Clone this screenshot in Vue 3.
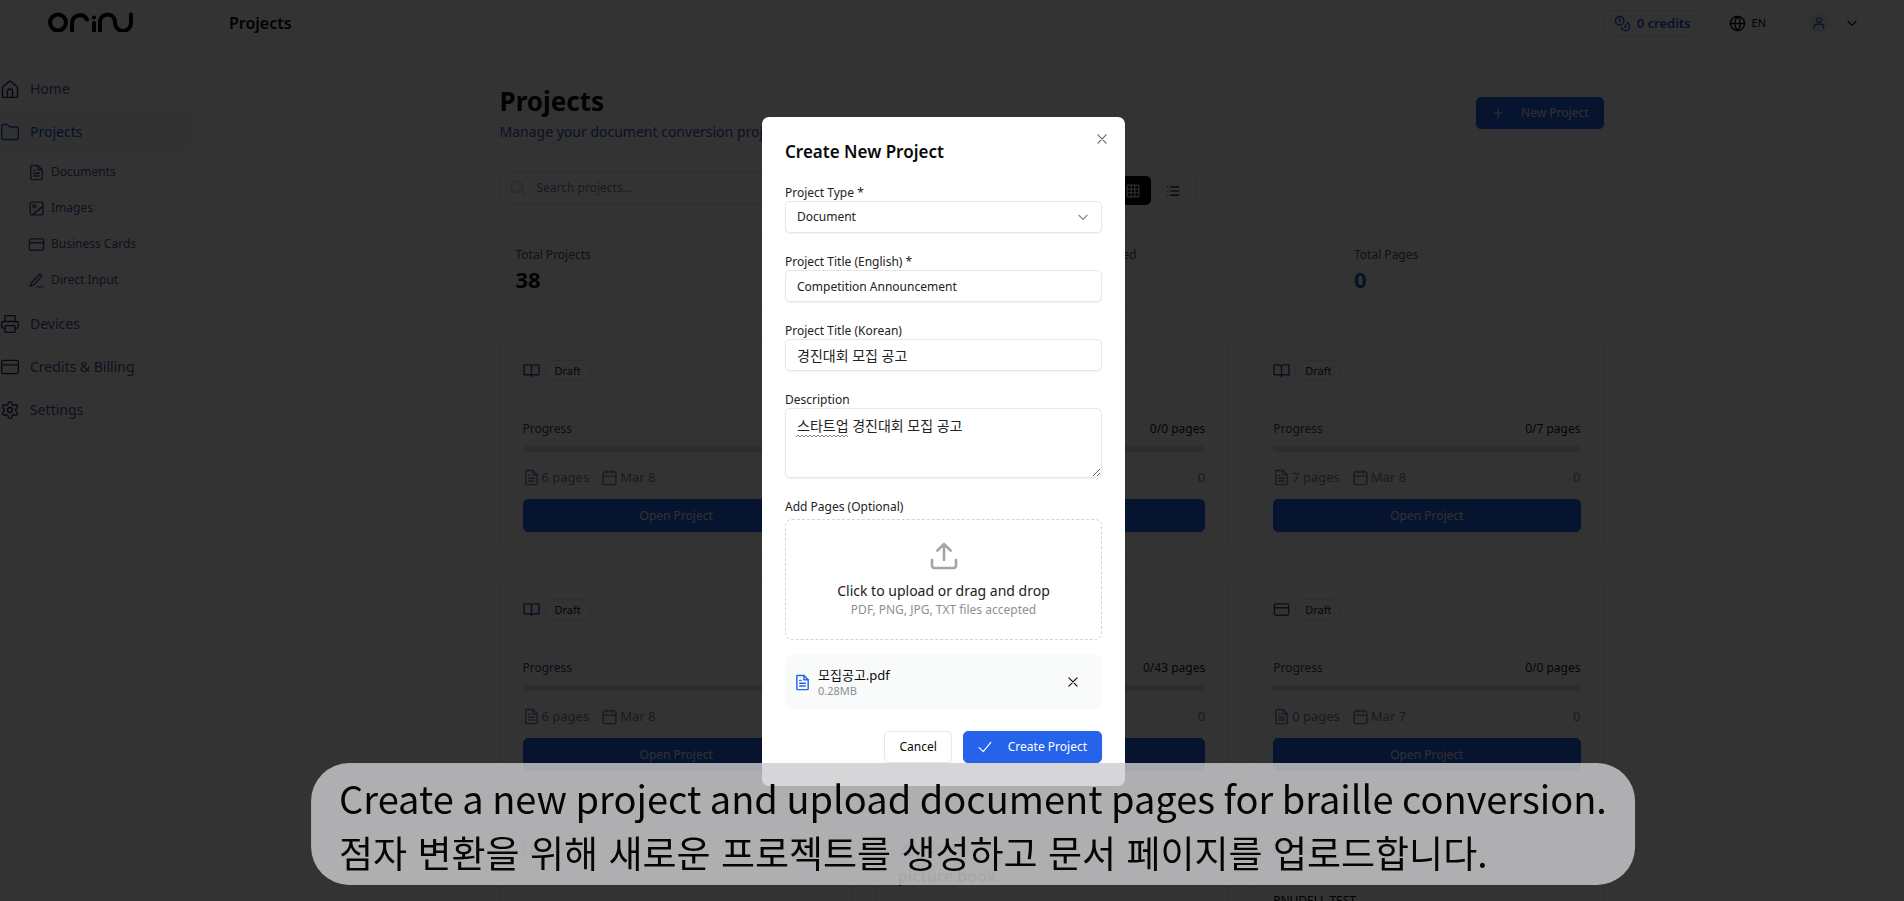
<template>
    <div class="app">
        <aside class="sidebar">
            <a href="#" class="logo" aria-label="orinu">
                <svg viewBox="0 0 86 20" width="86" height="20">
                    <circle cx="10" cy="10.500" r="8" />
                    <path d="M24 18.500v-8a8 8 0 0 1 15-3" />
                    <path d="M46 11v7.500M46 5.500v.1" />
                    <path d="M52 18.500v-8.500a7.500 7.500 0 0 1 15 0v1a8 8 0 0 0 16 0V2.500" />
                </svg>
            </a>
            <nav class="nav">
                <template v-for="item in menu" :key="item.label">
                    <a href="#" class="nav-item" :class="{ active: item.active }">
                        <svg class="icon i20" viewBox="0 0 24 24" v-html="icons[item.icon]"></svg>
                        {{ item.label }}
                    </a>
                    <div v-if="item.children" class="sub-nav">
                        <a v-for="sub in item.children" :key="sub.label" href="#" class="sub-item">
                            <svg class="icon i17" viewBox="0 0 24 24" v-html="icons[sub.icon]"></svg>
                            {{ sub.label }}
                        </a>
                    </div>
                </template>
            </nav>
        </aside>

        <div class="page">
            <header class="topbar">
                <span class="topbar-title">Projects</span>
                <div class="topbar-right">
                    <button type="button" class="credits">
                        <svg class="icon i17" viewBox="0 0 24 24" v-html="icons.coins"></svg>
                        0 credits
                    </button>
                    <button type="button" class="lang">
                        <svg class="icon i17" viewBox="0 0 24 24" v-html="icons.globe"></svg>
                        EN
                    </button>
                    <button type="button" class="user" aria-label="Account">
                        <span class="avatar">
                            <svg class="icon i14" viewBox="0 0 24 24" v-html="icons.user"></svg>
                        </span>
                        <svg class="icon i14" viewBox="0 0 24 24" v-html="icons.chevron"></svg>
                    </button>
                </div>
            </header>

            <main class="content">
                <div class="head">
                    <div>
                        <h1>Projects</h1>
                        <p class="lead">Manage your document conversion projects</p>
                    </div>
                    <button type="button" class="btn primary new-project">
                        <svg class="icon i14" viewBox="0 0 24 24" v-html="icons.plus"></svg>
                        New Project
                    </button>
                </div>

                <div class="tools">
                    <label class="search">
                        <svg class="icon i17" viewBox="0 0 24 24" v-html="icons.search"></svg>
                        <input type="text" placeholder="Search projects..." aria-label="Search projects" />
                    </label>
                    <div class="view-toggle">
                        <button type="button" class="on" aria-label="Grid view">
                            <svg class="icon i14" viewBox="0 0 24 24" v-html="icons.grid"></svg>
                        </button>
                        <button type="button" aria-label="List view">
                            <svg class="icon i14" viewBox="0 0 24 24" v-html="icons.list"></svg>
                        </button>
                    </div>
                </div>

                <div class="stats">
                    <div v-for="stat in stats" :key="stat.label" class="stat">
                        <span class="stat-label">{{ stat.label }}</span>
                        <strong :class="{ blue: stat.blue }">{{ stat.value }}</strong>
                    </div>
                </div>

                <div class="cards">
                    <article v-for="(card, i) in cards" :key="i" class="card">
                        <div class="card-top">
                            <svg class="icon i17" viewBox="0 0 24 24" v-html="icons[card.icon]"></svg>
                            <span class="badge">Draft</span>
                        </div>
                        <div class="card-text">
                            <h3 v-if="card.title">{{ card.title }}</h3>
                            <p v-if="card.note">{{ card.note }}</p>
                        </div>
                        <template v-if="card.done">
                            <div class="progress-row">
                                <span>Progress</span>
                                <b>{{ card.done }} pages</b>
                            </div>
                            <div class="bar"></div>
                            <div class="meta">
                                <svg class="icon i17" viewBox="0 0 24 24" v-html="icons.file"></svg>
                                <span>{{ card.pages }} pages</span>
                                <svg class="icon i17 date" viewBox="0 0 24 24" v-html="icons.calendar"></svg>
                                <span>{{ card.date }}</span>
                                <span class="count">0</span>
                            </div>
                            <button type="button" class="btn primary open">Open Project</button>
                        </template>
                    </article>
                </div>
            </main>
        </div>

        <div class="overlay">
            <form class="modal" role="dialog" aria-labelledby="modal-title" @submit.prevent>
                <button type="button" class="close" aria-label="Close">
                    <svg class="icon i14" viewBox="0 0 24 24" v-html="icons.x"></svg>
                </button>
                <h2 id="modal-title">Create New Project</h2>

                <div class="field">
                    <label for="type">Project Type *</label>
                    <div class="select-wrap">
                        <select id="type" v-model="form.type">
                            <option>Document</option>
                            <option>Image</option>
                            <option>Business Card</option>
                        </select>
                        <svg class="icon i14" viewBox="0 0 24 24" v-html="icons.chevron"></svg>
                    </div>
                </div>
                <div class="field">
                    <label for="title-en">Project Title (English) *</label>
                    <input id="title-en" v-model="form.titleEn" type="text" />
                </div>
                <div class="field">
                    <label for="title-ko">Project Title (Korean)</label>
                    <input id="title-ko" v-model="form.titleKo" type="text" class="ko" />
                </div>
                <div class="field desc">
                    <label for="desc">Description</label>
                    <textarea id="desc" v-model="form.description" class="ko" spellcheck="false"></textarea>
                    <!-- spelling mark under the first word -->
                    <svg class="squiggle" viewBox="0 0 52 4" width="52" height="4">
                        <path d="M0 3l2-2 2 2 2-2 2 2 2-2 2 2 2-2 2 2 2-2 2 2 2-2 2 2 2-2 2 2 2-2 2 2 2-2 2 2 2-2 2 2 2-2 2 2 2-2 2 2 2-2 2 2" />
                    </svg>
                </div>

                <div class="field">
                    <label for="files">Add Pages (Optional)</label>
                    <label class="drop">
                        <svg class="icon i32" viewBox="0 0 24 24" v-html="icons.upload"></svg>
                        <span class="drop-main">Click to upload or drag and drop</span>
                        <span class="drop-hint">PDF, PNG, JPG, TXT files accepted</span>
                        <input id="files" type="file" multiple />
                    </label>
                </div>

                <div class="file">
                    <svg class="icon i17" viewBox="0 0 24 24" v-html="icons.file"></svg>
                    <div class="file-info">
                        <span class="file-name">모집공고.pdf</span>
                        <span class="file-size">0.28MB</span>
                    </div>
                    <button type="button" aria-label="Remove file">
                        <svg class="icon i14" viewBox="0 0 24 24" v-html="icons.x"></svg>
                    </button>
                </div>

                <div class="actions">
                    <button type="button" class="btn">Cancel</button>
                    <button type="submit" class="btn primary create">
                        <svg class="icon i14" viewBox="0 0 24 24" v-html="icons.check"></svg>
                        Create Project
                    </button>
                </div>
            </form>
        </div>

        <div class="caption">
            <p>Create a new project and upload document pages for braille conversion.</p>
            <p lang="ko">점자 변환을 위해 새로운 프로젝트를 생성하고 문서 페이지를 업로드합니다.</p>
        </div>
    </div>
</template>

<script setup>
import { reactive } from 'vue'

const icons = {
    home: '<path d="M3 10l9-8 9 8v12H3z"/><path d="M9 22v-7a3 3 0 0 1 6 0v7"/>',
    folder: '<path d="M2 4.500A1.500 1.500 0 0 1 3.500 3H9l3 3h8.500A1.500 1.500 0 0 1 22 7.500v12a1.500 1.500 0 0 1-1.500 1.500h-17A1.500 1.500 0 0 1 2 19.500z"/>',
    file: '<path d="M14 2H5a1 1 0 0 0-1 1v18a1 1 0 0 0 1 1h14a1 1 0 0 0 1-1V8z"/><path d="M14 2v6h6M8 9h2M8 13h8M8 17h8"/>',
    image: '<rect x="3" y="3" width="18" height="18" rx="2"/><circle cx="9" cy="9" r="2"/><path d="M6 21L21 9"/>',
    card: '<rect x="2" y="4" width="20" height="16" rx="2"/><path d="M2 9.500h20"/>',
    pen: '<path d="M17 3l3 3L8 18l-5 2 2-5zM13 21h8"/>',
    printer: '<path d="M6 17H4a2 2 0 0 1-2-2v-4a2 2 0 0 1 2-2h16a2 2 0 0 1 2 2v4a2 2 0 0 1-2 2h-2"/><path d="M6 9V2h12v7"/><rect x="6" y="14" width="12" height="8" rx="1"/>',
    gear: '<path d="M12.220 2h-.440a2 2 0 0 0-2 2v.180a2 2 0 0 1-1 1.730l-.430.250a2 2 0 0 1-2 0l-.150-.080a2 2 0 0 0-2.730.730l-.220.380a2 2 0 0 0 .730 2.730l.150.100a2 2 0 0 1 1 1.720v.510a2 2 0 0 1-1 1.740l-.150.090a2 2 0 0 0-.730 2.730l.220.380a2 2 0 0 0 2.730.730l.150-.080a2 2 0 0 1 2 0l.430.250a2 2 0 0 1 1 1.730V20a2 2 0 0 0 2 2h.440a2 2 0 0 0 2-2v-.180a2 2 0 0 1 1-1.730l.430-.250a2 2 0 0 1 2 0l.150.080a2 2 0 0 0 2.730-.730l.220-.390a2 2 0 0 0-.730-2.730l-.150-.080a2 2 0 0 1-1-1.740v-.500a2 2 0 0 1 1-1.740l.150-.090a2 2 0 0 0 .730-2.730l-.220-.380a2 2 0 0 0-2.730-.730l-.150.080a2 2 0 0 1-2 0l-.430-.250a2 2 0 0 1-1-1.730V4a2 2 0 0 0-2-2z"/><circle cx="12" cy="12" r="3"/>',
    coins: '<circle cx="8" cy="8" r="6"/><path d="M18 10.400A6 6 0 1 1 10.300 18"/><path d="M7 6h1v4M16.700 13.900l.7.7-2.800 2.800"/>',
    globe: '<circle cx="12" cy="12" r="10"/><path d="M12 2a14.500 14.500 0 0 0 0 20 14.500 14.500 0 0 0 0-20M2 12h20"/>',
    user: '<path d="M4 21v-3a4 4 0 0 1 4-4h8a4 4 0 0 1 4 4v3"/><circle cx="12" cy="7" r="4"/>',
    chevron: '<path d="M5 9l7 7 7-7"/>',
    plus: '<path d="M5 12h14M12 5v14"/>',
    search: '<circle cx="11" cy="11" r="8"/><path d="M21 21l-4-4"/>',
    grid: '<rect x="2" y="2" width="20" height="20" rx="1"/><path d="M2 9h20M2 15h20M9 2v20M15 2v20"/>',
    list: '<path d="M8 5h14M8 12h14M8 19h14M3 5h.1M3 12h.1M3 19h.1"/>',
    book: '<path d="M12 6v15M1.500 18V4H9a3 3 0 0 1 3 3 3 3 0 0 1 3-3h7.500v14H15a3 3 0 0 0-3 3 3 3 0 0 0-3-3z"/>',
    calendar: '<rect x="3" y="4" width="18" height="18" rx="2"/><path d="M8 2v4M16 2v4M3 10h18"/>',
    x: '<path d="M5 5l14 14M19 5L5 19"/>',
    upload: '<path d="M21 15v4a2 2 0 0 1-2 2H5a2 2 0 0 1-2-2v-4M7 8l5-5 5 5M12 3v12"/>',
    check: '<path d="M2 13l7 7L22 4"/>',
}

const menu = [
    { label: 'Home', icon: 'home' },
    {
        label: 'Projects',
        icon: 'folder',
        active: true,
        children: [
            { label: 'Documents', icon: 'file' },
            { label: 'Images', icon: 'image' },
            { label: 'Business Cards', icon: 'card' },
            { label: 'Direct Input', icon: 'pen' },
        ],
    },
    { label: 'Devices', icon: 'printer' },
    { label: 'Credits & Billing', icon: 'card' },
    { label: 'Settings', icon: 'gear' },
]

const stats = [
    { label: 'Total Projects', value: 38 },
    { label: 'Draft', value: 38 },
    { label: 'Completed', value: '' },
    { label: 'Total Pages', value: 0, blue: true },
]

const cards = [
    { icon: 'book', done: '0/6', pages: 6, date: 'Mar 8' },
    { icon: 'book', done: '0/0', pages: 0, date: 'Mar 8' },
    { icon: 'book', done: '0/7', pages: 7, date: 'Mar 8' },
    { icon: 'book', done: '0/6', pages: 6, date: 'Mar 8' },
    { icon: 'book', done: '0/43', pages: 43, date: 'Mar 8' },
    { icon: 'card', done: '0/0', pages: 0, date: 'Mar 7' },
    { icon: 'book' },
    { icon: 'pen', title: 'picture book' },
    { icon: 'book', note: 'PNUDELL TEST' },
]

const form = reactive({
    type: 'Document',
    titleEn: 'Competition Announcement',
    titleKo: '경진대회 모집 공고',
    description: '스타트업 경진대회 모집 공고',
})
</script>

<style>
body {
    overflow: hidden;
}
</style>

<style scoped>
* {
    box-sizing: border-box;
}

.app {
    display: flex;
    height: 100vh;
    overflow: hidden;
    background: #fff;
    color: #0a0a0a;
    font: 12px/18px "Noto Sans", "Noto Sans CJK KR", sans-serif;
}

h1,
h2,
h3,
p {
    margin: 0;
}

a {
    color: inherit;
    text-decoration: none;
}

button,
input,
select,
textarea {
    font: inherit;
    color: inherit;
}

button {
    padding: 0;
    border: 0;
    background: none;
}

.icon {
    flex: none;
    fill: none;
    stroke: currentColor;
    stroke-width: 2;
    stroke-linecap: round;
    stroke-linejoin: round;
}

.i14 {
    width: 14px;
    height: 14px;
}

.i17 {
    width: 17px;
    height: 17px;
}

.i20 {
    width: 20px;
    height: 20px;
    stroke-width: 1.6;
}

.i32 {
    width: 32px;
    height: 32px;
}

/* sidebar */
.sidebar {
    flex: none;
    width: 207px;
    border-right: 1px solid #f6f7f8;
}

.logo {
    display: block;
    height: 52px;
    padding: 12px 0 0 48px;
}

.logo svg {
    display: block;
    fill: none;
    stroke: #000;
    stroke-width: 4;
    stroke-linecap: round;
}

.nav {
    display: flex;
    flex-direction: column;
    gap: 6px;
    padding: 18px 15px 0 0;
}

.nav-item {
    display: flex;
    align-items: center;
    gap: 10px;
    height: 37px;
    border-radius: 0 7px 7px 0;
    color: #405894;
    font-size: 14px;
}

.nav-item .icon {
    color: #1c2c50;
}

.nav-item.active,
.nav-item.active .icon {
    color: #2050c8;
}

.nav-item.active {
    background: #fafafb;
    border: 1px solid #eceef1;
    border-left: 0;
}

.sub-nav {
    display: flex;
    flex-direction: column;
    gap: 4px;
    padding: 0 0 3px 28px;
}

.sub-item {
    display: flex;
    align-items: center;
    gap: 6px;
    height: 32px;
    color: #405894;
}

/* top bar */
.page {
    flex: 1;
    min-width: 0;
}

.topbar {
    display: flex;
    align-items: center;
    justify-content: space-between;
    height: 46px;
    padding: 0 29px 0 22px;
}

.topbar-title {
    font-size: 16px;
    font-weight: 600;
}

.topbar-right {
    display: flex;
    align-items: center;
    gap: 16px;
}

.topbar-right button {
    display: flex;
    align-items: center;
    justify-content: center;
    gap: 6px;
    border: 1px solid #e5e7eb;
    border-radius: 7px;
}

.topbar-right .credits {
    height: 27px;
    padding: 0 10px;
    border-color: #e2e6ee;
    color: #2555c8;
    font-size: 13px;
    font-weight: 600;
}

.topbar-right .lang {
    height: 30px;
    padding: 0 10px;
    border-color: #f1f2f4;
    font-size: 11px;
}

.topbar-right .user {
    gap: 16px;
    height: 32px;
    padding: 0 15px;
    border-color: #f1f2f4;
}

.avatar {
    display: grid;
    place-items: center;
    width: 20px;
    height: 20px;
    border-radius: 50%;
    background: #e8ebf2;
    color: #2555c8;
}

/* content */
.content {
    width: calc(100% - 28px);
    max-width: 1104px;
    margin: 0 auto;
    padding-top: 38px;
    position: relative;
    right: 4px;
}

.head {
    display: flex;
    align-items: flex-start;
    justify-content: space-between;
    height: 61px;
}

h1 {
    font-size: 26px;
    line-height: 34px;
    font-weight: 700;
}

.lead {
    margin-top: 2px;
    color: #3858b0;
    font-size: 14px;
    line-height: 24px;
}

.btn {
    display: flex;
    align-items: center;
    justify-content: center;
    height: 32px;
    padding: 0 14px;
    border: 1px solid #e5e7eb;
    border-radius: 5px;
    background: #fff;
    box-shadow: 0 1px 2px rgba(0, 0, 0, .06);
}

.primary {
    border-color: #2563eb;
    background: #2563eb;
    color: #fff;
}

.new-project {
    margin-top: 13px;
}

.head .btn,
.open {
    color: #eceef2;
}

.new-project,
.create {
    gap: 16px;
}

.tools {
    display: flex;
    align-items: flex-start;
    gap: 14px;
    max-width: 696px;
    margin-top: 26px;
}

.search {
    display: flex;
    flex: 1;
    align-items: center;
    gap: 11px;
    height: 33px;
    padding: 0 8px;
    border: 1px solid #e5e7eb;
    border-radius: 5px;
    color: #cdd0d6;
}

.search input {
    flex: 1;
    min-width: 0;
    padding: 0;
    border: 0;
    outline: 0;
    background: none;
}

.search input::placeholder {
    color: #7284b0;
}

.view-toggle {
    display: flex;
    gap: 4px;
    padding: 4px;
    border: 1px solid #e9ebee;
    border-radius: 7px;
}

.view-toggle button {
    display: grid;
    place-items: center;
    width: 36px;
    height: 29px;
    border-radius: 5px;
}

.view-toggle .on {
    background: #000;
    color: #e5e7eb;
}

.stats {
    display: grid;
    grid-template-columns: repeat(4, 1fr);
    gap: 14px;
    margin-top: 22px;
}

.stat {
    display: flex;
    flex-direction: column;
    height: 78px;
    padding: 13px 15px;
    border: 1px solid #eff0f2;
    border-radius: 7px;
}

.stat-label {
    color: #405894;
}

.stat strong {
    font-size: 22px;
    line-height: 30px;
    font-weight: 700;
}

.stat .blue {
    color: #2555c8;
}

.cards {
    display: grid;
    grid-template-columns: repeat(3, 1fr);
    gap: 21px 22px;
    margin-top: 28px;
}

.card {
    height: 218px;
    padding: 21px 22px;
    border: 1px solid #eaecef;
    border-radius: 10px;
}

.card-top {
    display: flex;
    align-items: center;
    gap: 5px;
    height: 21px;
    color: #3050a4;
}

.badge {
    height: 21px;
    padding: 0 9px;
    border: 1px solid #e5e7eb;
    border-radius: 7px;
    color: #111c38;
    font-size: 11px;
    line-height: 19px;
}

.card-text {
    display: flex;
    flex-direction: column;
    height: 39px;
    padding-top: 6px;
}

h3 {
    font-size: 16px;
    line-height: 22px;
    font-weight: 600;
}

.card-text p {
    margin-top: 28px;
    line-height: 16px;
}

.progress-row {
    display: flex;
    justify-content: space-between;
    color: #33487c;
}

.progress-row b {
    color: #111c38;
    font-weight: 400;
}

.bar {
    height: 6px;
    margin-top: 8px;
    border-radius: 3px;
    background: #dcdee3;
}

.meta {
    display: flex;
    align-items: center;
    gap: 2px;
    height: 18px;
    margin-top: 16px;
    color: #7284b0;
    font-size: 13px;
}

.date {
    margin-left: 10px;
}

.count {
    margin-left: auto;
}

.open {
    width: 100%;
    height: 33px;
    margin-top: 13px;
}

/* modal */
.overlay {
    position: fixed;
    inset: 0;
    display: grid;
    place-items: center;
    padding: 2px 17px 0 0;
    background: rgba(0, 0, 0, .8);
}

.modal {
    position: relative;
    width: 363px;
    padding: 23px;
    border-radius: 7px;
    background: #fff;
}

.close {
    position: absolute;
    top: 15px;
    right: 16px;
    color: #666;
}

.close svg {
    display: block;
}

h2 {
    font-size: 17px;
    line-height: 24px;
    font-weight: 600;
}

.field {
    display: flex;
    flex-direction: column;
    margin-top: 20px;
}

.field > label:first-child {
    line-height: 17px;
    color: #222;
}

.field input[type="text"],
.field select,
.field textarea {
    display: block;
    width: 100%;
    height: 32px;
    padding: 0 11px;
    border: 1px solid #e5e7eb;
    border-radius: 5px;
    outline: 0;
    background: #fff;
    color: #222;
    box-shadow: 0 1px 2px rgba(0, 0, 0, .06);
}

.select-wrap {
    position: relative;
}

.field select {
    appearance: none;
}

.select-wrap svg {
    position: absolute;
    top: 9px;
    right: 12px;
    color: #888;
    pointer-events: none;
}

.field textarea {
    height: 70px;
    padding: 8px 11px;
}

.field .ko {
    font-size: 14px;
}

.desc {
    position: relative;
}

.squiggle {
    position: absolute;
    top: 43px;
    left: 11px;
    fill: none;
    stroke: #888;
}

.drop {
    display: flex;
    flex-direction: column;
    align-items: center;
    height: 121px;
    margin-top: 4px;
    padding-top: 20px;
    border: 1px dashed #d1d5db;
    border-radius: 7px;
}

.drop svg {
    color: #a3a6ad;
}

.drop-main {
    margin-top: 9px;
    color: #222;
    font-size: 14px;
    line-height: 20px;
}

.drop-hint {
    color: #8b8f98;
}

.drop input {
    position: absolute;
    width: 1px;
    height: 1px;
    opacity: 0;
}

.file {
    display: flex;
    align-items: center;
    gap: 7px;
    height: 54px;
    margin-top: 15px;
    padding: 0 22px 0 9px;
    border-radius: 7px;
    background: #f9fafa;
}

.file > svg {
    color: #2563eb;
}

.file-info {
    display: flex;
    flex: 1;
    flex-direction: column;
}

.file-name {
    font-size: 13px;
}

.file-size {
    color: #8b8f98;
    font-size: 11px;
    line-height: 14px;
}

.file button svg {
    display: block;
}

.actions {
    display: flex;
    justify-content: flex-end;
    gap: 11px;
    margin-top: 22px;
}

/* caption bar */
.caption {
    position: fixed;
    bottom: 16px;
    left: calc(50% + 21px);
    width: max-content;
    padding: 9px 28px 7px;
    border-radius: 38px;
    background: rgba(204, 205, 207, .81);
    color: #050505;
    font-family: "Noto Sans CJK KR", sans-serif;
    font-size: 38px;
    line-height: 52px;
    white-space: nowrap;
    transform: translateX(-50%);
}

.caption p:last-child {
    margin-top: 2px;
    font-size: 37px;
}
</style>
